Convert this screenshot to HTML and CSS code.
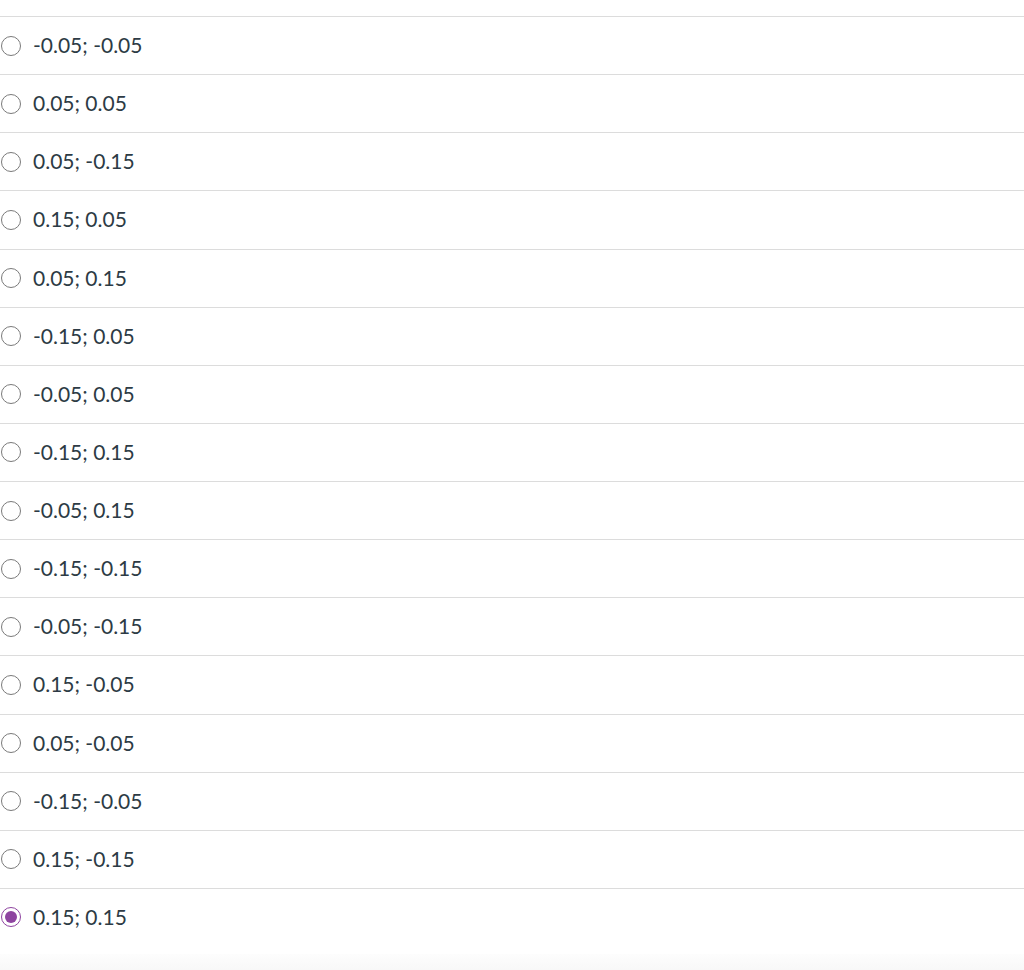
FILE: index.html
```html
<!DOCTYPE html>
<html>
<head>
<meta charset="utf-8">
<link rel="stylesheet" href="styles.css">
</head>
<body>
<div class="answers">
  <label class="row"><span class="radio"></span><span class="txt">-0.05; -0.05</span></label>
  <label class="row"><span class="radio"></span><span class="txt">0.05; 0.05</span></label>
  <label class="row"><span class="radio"></span><span class="txt">0.05; -0.15</span></label>
  <label class="row"><span class="radio"></span><span class="txt">0.15; 0.05</span></label>
  <label class="row"><span class="radio"></span><span class="txt">0.05; 0.15</span></label>
  <label class="row"><span class="radio"></span><span class="txt">-0.15; 0.05</span></label>
  <label class="row"><span class="radio"></span><span class="txt">-0.05; 0.05</span></label>
  <label class="row"><span class="radio"></span><span class="txt">-0.15; 0.15</span></label>
  <label class="row"><span class="radio"></span><span class="txt">-0.05; 0.15</span></label>
  <label class="row"><span class="radio"></span><span class="txt">-0.15; -0.15</span></label>
  <label class="row"><span class="radio"></span><span class="txt">-0.05; -0.15</span></label>
  <label class="row"><span class="radio"></span><span class="txt">0.15; -0.05</span></label>
  <label class="row"><span class="radio"></span><span class="txt">0.05; -0.05</span></label>
  <label class="row"><span class="radio"></span><span class="txt">-0.15; -0.05</span></label>
  <label class="row"><span class="radio"></span><span class="txt">0.15; -0.15</span></label>
  <label class="row"><span class="radio checked"></span><span class="txt">0.15; 0.15</span></label>
</div>
<div class="footer-fade"></div>
</body>
</html>
```

FILE: styles.css
```css
html, body {
  margin: 0;
  padding: 0;
  background: #fff;
}
body {
  font-family: Lato, "Liberation Sans", sans-serif;
  color: #2d3b45;
  height: 970px;
  overflow: hidden;
}
.answers {
  padding-top: 16px;
}
.row {
  display: flex;
  align-items: center;
  height: 57.13px;
  border-top: 1px solid #dcdcdc;
}
.radio {
  box-sizing: border-box;
  width: 20px;
  height: 20px;
  margin-left: 1px;
  margin-right: 12px;
  border: 1px solid #7a7a7a;
  border-radius: 50%;
  background: #fff;
  display: flex;
  align-items: center;
  justify-content: center;
}
.radio.checked {
  border: 1.5px solid #8e44a0;
}
.radio.checked::after {
  content: "";
  width: 12px;
  height: 12px;
  border-radius: 50%;
  background: #8e44a0;
}
.txt {
  font-size: 21px;
  line-height: 1;
  margin-bottom: 2px;
}
.footer-fade {
  height: 16px;
  margin-top: 8px;
  background: linear-gradient(#fdfdfd, #f8f8f8);
}
```
